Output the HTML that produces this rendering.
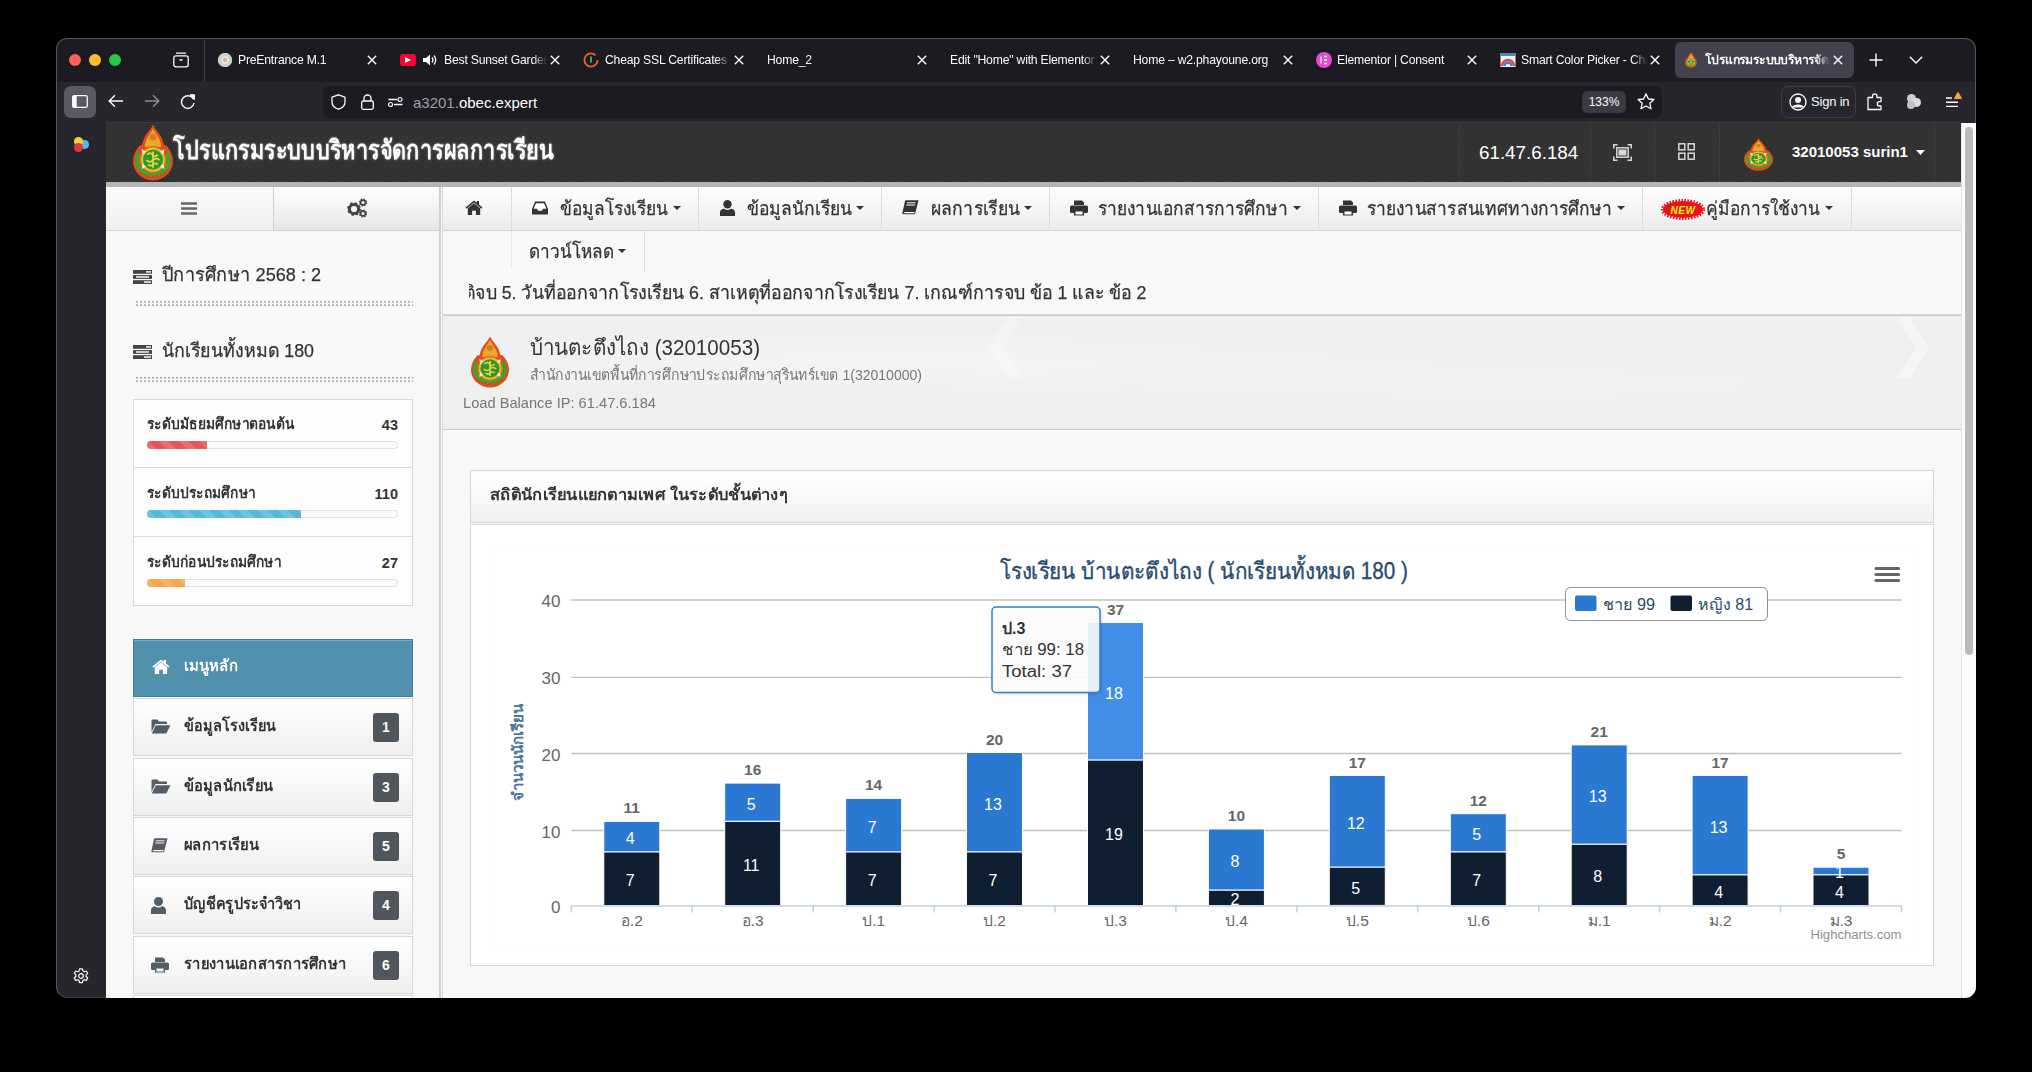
<!DOCTYPE html>
<html><head><meta charset="utf-8">
<style>
*{box-sizing:border-box;margin:0;padding:0}
html,body{width:2032px;height:1072px;overflow:hidden;background:#000;font-family:"Liberation Sans",sans-serif}
#win{position:absolute;left:0;top:0;width:2032px;height:1072px;clip-path:inset(38px 56px 74px 56px round 11px);background:#1c1b22}
.a{position:absolute;white-space:nowrap}
.tl{position:absolute;width:12px;height:12px;border-radius:50%;top:54px}
.tt{position:absolute;top:52px;color:#fbfbfe;font-size:12.2px;letter-spacing:-0.2px;white-space:nowrap;overflow:hidden;line-height:16px;-webkit-mask-image:linear-gradient(90deg,#000 calc(100% - 14px),transparent)}
svg{position:absolute;overflow:visible}
</style></head><body>
<div id="win">

<!-- chrome -->
<div class="a" style="left:56px;top:38px;width:1920px;height:44px;background:#1c1b21"></div>
<div class="a" style="left:56px;top:82px;width:1920px;height:41px;background:#27262c"></div>
<div class="a" style="left:56px;top:123px;width:50px;height:875px;background:#27262c"></div>
<div class="a" style="left:56px;top:38px;width:1920px;height:960px;border-radius:11px;border:1px solid #56555d;border-bottom-color:#3a3940"></div>
<div class="tl" style="left:69px;background:#ff5f57"></div>
<div class="tl" style="left:89px;background:#febc2e"></div>
<div class="tl" style="left:109px;background:#28c840"></div>
<svg style="left:173px;top:52px" width="16" height="16" viewBox="0 0 16 16"><rect x="0.8" y="3.8" width="14.4" height="11" rx="2" fill="none" stroke="#fbfbfe" stroke-width="1.3"/><path d="M3 1.2h10" stroke="#fbfbfe" stroke-width="1.3"/><path d="M6.5 8h3" stroke="#fbfbfe" stroke-width="1.3"/></svg>
<div class="a" style="left:204px;top:38px;width:1px;height:44px;background:#3f3e46"></div>
<div class="a" style="left:1675px;top:42px;width:179px;height:36px;border-radius:6px;background:#42414d"></div>
<div class="tt" style="left:238px;width:126px">PreEntrance M.1</div>
<svg style="left:367px;top:55px" width="10" height="10" viewBox="0 0 10 10"><path d="M0.8 0.8l8.4 8.4M9.2 0.8l-8.4 8.4" stroke="#fbfbfe" stroke-width="1.4"/></svg>
<div class="tt" style="left:444px;width:103px">Best Sunset Garden</div>
<svg style="left:550px;top:55px" width="10" height="10" viewBox="0 0 10 10"><path d="M0.8 0.8l8.4 8.4M9.2 0.8l-8.4 8.4" stroke="#fbfbfe" stroke-width="1.4"/></svg>
<div class="tt" style="left:605px;width:126px">Cheap SSL Certificates</div>
<svg style="left:734px;top:55px" width="10" height="10" viewBox="0 0 10 10"><path d="M0.8 0.8l8.4 8.4M9.2 0.8l-8.4 8.4" stroke="#fbfbfe" stroke-width="1.4"/></svg>
<div class="tt" style="left:767px;width:147px">Home_2</div>
<svg style="left:917px;top:55px" width="10" height="10" viewBox="0 0 10 10"><path d="M0.8 0.8l8.4 8.4M9.2 0.8l-8.4 8.4" stroke="#fbfbfe" stroke-width="1.4"/></svg>
<div class="tt" style="left:950px;width:147px">Edit "Home" with Elementor</div>
<svg style="left:1100px;top:55px" width="10" height="10" viewBox="0 0 10 10"><path d="M0.8 0.8l8.4 8.4M9.2 0.8l-8.4 8.4" stroke="#fbfbfe" stroke-width="1.4"/></svg>
<div class="tt" style="left:1133px;width:147px">Home – w2.phayoune.org</div>
<svg style="left:1283px;top:55px" width="10" height="10" viewBox="0 0 10 10"><path d="M0.8 0.8l8.4 8.4M9.2 0.8l-8.4 8.4" stroke="#fbfbfe" stroke-width="1.4"/></svg>
<div class="tt" style="left:1337px;width:127px">Elementor | Consent</div>
<svg style="left:1467px;top:55px" width="10" height="10" viewBox="0 0 10 10"><path d="M0.8 0.8l8.4 8.4M9.2 0.8l-8.4 8.4" stroke="#fbfbfe" stroke-width="1.4"/></svg>
<div class="tt" style="left:1521px;width:126px">Smart Color Picker - Chrome</div>
<svg style="left:1650px;top:55px" width="10" height="10" viewBox="0 0 10 10"><path d="M0.8 0.8l8.4 8.4M9.2 0.8l-8.4 8.4" stroke="#fbfbfe" stroke-width="1.4"/></svg>
<div class="tt" style="left:1705px;width:125px;font-weight:bold;letter-spacing:-0.6px">โปรแกรมระบบบริหารจัดการผลการเรียน</div>
<svg style="left:1833px;top:55px" width="10" height="10" viewBox="0 0 10 10"><path d="M0.8 0.8l8.4 8.4M9.2 0.8l-8.4 8.4" stroke="#fbfbfe" stroke-width="1.4"/></svg>

<div class="a" style="left:218px;top:53px;width:14px;height:14px;border-radius:50%;background:#dfe6df;box-shadow:inset 0 0 0 3px #c9d4c9"></div>
<div class="a" style="left:223px;top:58px;width:4px;height:4px;border-radius:50%;background:#e8a0a0"></div>
<div class="a" style="left:400px;top:54px;width:16px;height:12px;border-radius:3px;background:#ff0033"></div>
<svg style="left:405px;top:57px" width="6" height="6" viewBox="0 0 6 6"><path d="M0 0L6 3L0 6Z" fill="#fff"/></svg>
<svg style="left:423px;top:54px" width="14" height="12" viewBox="0 0 14 12"><path d="M0 4h3l4-3.5v11L3 8H0Z" fill="#fbfbfe"/><path d="M9 3.5q2 2.5 0 5M11 1.5q3.5 4.5 0 9" stroke="#fbfbfe" stroke-width="1.3" fill="none"/></svg>
<svg style="left:583px;top:52px" width="16" height="16" viewBox="0 0 16 16"><circle cx="8" cy="8" r="6.6" fill="none" stroke="#e8612c" stroke-width="1.8" stroke-dasharray="36 6"/><path d="M8 4.5v6" stroke="#3fae49" stroke-width="2"/></svg>
<div class="a" style="left:1316px;top:52px;width:16px;height:16px;border-radius:50%;background:#e649d2"></div>
<svg style="left:1320px;top:56px" width="8" height="8" viewBox="0 0 8 8"><path d="M1 0.5v7M4 0.5h3M4 4h3M4 7.5h3" stroke="#fff" stroke-width="1.3"/></svg>
<svg style="left:1500px;top:52px" width="16" height="16" viewBox="0 0 16 16"><rect x="0.5" y="1" width="15" height="14" fill="#f2f2f2"/><path d="M2 14A6 6 0 0 1 14 14" fill="none" stroke="#e84c3d" stroke-width="2.5"/><path d="M4.5 14A3.5 3.5 0 0 1 11.5 14" fill="none" stroke="#3a7bd5" stroke-width="2.5"/><rect x="0.5" y="1" width="15" height="3" fill="#4a90a0"/></svg>
<svg style="left:1685px;top:52px" width="12" height="16" viewBox="0 0 37 52" preserveAspectRatio="none"><path d="M18.5 0.5C20 4 23 7 25 10C27 13 28 16 28.5 19L31 19.5C35 24 37 29 37 34A18.5 17.5 0 0 1 0 34C0 29 2 24 6 19.5L8.5 19C9 16 10 13 12 10C14 7 17 4 18.5 0.5Z" fill="#e44a1e"/>
<path d="M18.5 4C20 7 22.5 10 24 13C25.5 16 26 18 26 21H11C11 18 11.5 16 13 13C14.5 10 17 7 18.5 4Z" fill="#e9a828"/>
<circle cx="18.5" cy="12" r="3" fill="#e07a20"/>
<path d="M2 33A16.5 15.5 0 0 0 35 33C35 30 34 27 32 24L29 30L8 30L5 24C3 27 2 30 2 33Z" fill="#48a02c"/>
<circle cx="18.5" cy="32.5" r="12.5" fill="#e46a22"/>
<circle cx="18.5" cy="32.5" r="11" fill="#e8c030"/>
<circle cx="18.5" cy="32.5" r="9.3" fill="#2f9a2c"/>
<path d="M13 28q3-3 5 0q2 3 5 0M12.5 33q3 3 6 0q3-3 6 0M14 37q2.5 2 4.5 0q2-2 4.5 0M18.5 25v15" stroke="#f0d040" stroke-width="1.6" fill="none"/>
<path d="M8 23l4 2-3 3ZM29 23l-4 2 3 3ZM8 41l4-2-3-3ZM29 41l-4-2 3-3Z" fill="#f6e8ee"/>
<path d="M6 44q12.5 8 25 0" stroke="#d04020" stroke-width="1.5" fill="none" stroke-dasharray="2 2"/></svg>
<svg style="left:1869px;top:53px" width="14" height="14" viewBox="0 0 14 14"><path d="M7 0.5v13M0.5 7h13" stroke="#fbfbfe" stroke-width="1.4"/></svg>
<svg style="left:1909px;top:56px" width="14" height="8" viewBox="0 0 14 8"><path d="M0.8 0.8L7 7L13.2 0.8" stroke="#fbfbfe" stroke-width="1.4" fill="none"/></svg>

<div class="a" style="left:64px;top:86px;width:32px;height:32px;border-radius:7px;background:#5b5a62"></div>
<svg style="left:72px;top:95px" width="16" height="13" viewBox="0 0 16 13"><rect x="0.7" y="0.7" width="14.6" height="11.6" rx="1.5" fill="none" stroke="#fbfbfe" stroke-width="1.3"/><rect x="0.7" y="0.7" width="4" height="11.6" fill="#fbfbfe"/></svg>
<svg style="left:108px;top:94px" width="16" height="14" viewBox="0 0 16 14"><path d="M15 7H1.5M7 1.2L1.2 7L7 12.8" stroke="#fbfbfe" stroke-width="1.4" fill="none"/></svg>
<svg style="left:144px;top:94px" width="16" height="14" viewBox="0 0 16 14"><path d="M1 7h13.5M9 1.2L14.8 7L9 12.8" stroke="#8f8f96" stroke-width="1.4" fill="none"/></svg>
<svg style="left:180px;top:94px" width="16" height="15" viewBox="0 0 16 15"><path d="M13.5 5.5A6.3 6.3 0 1 0 14 9" stroke="#fbfbfe" stroke-width="1.4" fill="none"/><path d="M10 0.8h4.5v4.7Z" fill="#fbfbfe" stroke="#fbfbfe" stroke-width="1"/></svg>
<div class="a" style="left:323px;top:86px;width:1339px;height:32px;border-radius:7px;background:#1c1b21"></div>
<svg style="left:331px;top:94px" width="15" height="16" viewBox="0 0 15 16"><path d="M7.5 0.8L14 3.2V8C14 11.5 11 14 7.5 15.2C4 14 1 11.5 1 8V3.2Z" fill="none" stroke="#fbfbfe" stroke-width="1.3"/></svg>
<svg style="left:361px;top:94px" width="13" height="16" viewBox="0 0 13 16"><rect x="0.7" y="7" width="11.6" height="8.3" rx="1.5" fill="none" stroke="#fbfbfe" stroke-width="1.3"/><path d="M3 7V4.5a3.5 3.5 0 0 1 7 0V7" fill="none" stroke="#fbfbfe" stroke-width="1.3"/></svg>
<svg style="left:388px;top:97px" width="15" height="10" viewBox="0 0 15 10"><circle cx="12" cy="2.5" r="2" fill="none" stroke="#fbfbfe" stroke-width="1.2"/><path d="M0.5 2.5h8.5" stroke="#fbfbfe" stroke-width="1.3"/><circle cx="2.5" cy="7.5" r="2" fill="none" stroke="#fbfbfe" stroke-width="1.2"/><path d="M6 7.5h8.5" stroke="#fbfbfe" stroke-width="1.3"/></svg>
<div class="a" style="left:413px;top:94px;font-size:15px;line-height:17px;color:#9f9ea5">a3201.<span style="color:#fbfbfe">obec.expert</span></div>
<div class="a" style="left:1582px;top:91px;width:44px;height:22px;border-radius:5px;background:#3b3a42;color:#fbfbfe;font-size:12px;line-height:22px;text-align:center">133%</div>
<svg style="left:1637px;top:93px" width="18" height="17" viewBox="0 0 18 17"><path d="M9 0.9L11.4 6L16.9 6.5L12.8 10.2L14 15.8L9 13L4 15.8L5.2 10.2L1.1 6.5L6.6 6Z" fill="none" stroke="#fbfbfe" stroke-width="1.3" stroke-linejoin="round"/></svg>
<div class="a" style="left:1781px;top:86px;width:75px;height:32px;border-radius:7px;border:1px solid #3f3e46"></div>
<svg style="left:1789px;top:93px" width="18" height="18" viewBox="0 0 18 18"><circle cx="9" cy="9" r="8" fill="none" stroke="#fbfbfe" stroke-width="1.3"/><circle cx="9" cy="7" r="3" fill="#fbfbfe"/><path d="M3.5 14.5C5 11.5 13 11.5 14.5 14.5" fill="#fbfbfe" stroke="#fbfbfe" stroke-width="1.5"/></svg>
<div class="a" style="left:1811px;top:94px;letter-spacing:-0.2px;font-size:13px;line-height:16px;color:#fbfbfe">Sign in</div>
<svg style="left:1867px;top:92px" width="18" height="18" viewBox="0 0 18 18"><path d="M1 5.5h4.5V4a2.2 2.2 0 0 1 4.4 0v1.5h4.1v4.1h-1.5a2.2 2.2 0 0 0 0 4.4H14v3.5H1Z" fill="none" stroke="#fbfbfe" stroke-width="1.3" stroke-linejoin="round"/></svg>
<div class="a" style="left:1907px;top:94px;width:9px;height:9px;border-radius:50%;background:#cfcfd2"></div>
<div class="a" style="left:1912px;top:98px;width:9px;height:9px;border-radius:50%;background:#dcdcde"></div>
<div class="a" style="left:1907px;top:101px;width:8px;height:8px;border-radius:50%;background:#c4c4c8"></div>
<svg style="left:1945px;top:91px" width="18" height="18" viewBox="0 0 18 18"><path d="M1 7h6M1 11.2h12M1 15.4h12" stroke="#fbfbfe" stroke-width="1.4"/><path d="M9.5 7.5L13 1.3L16.5 7.5Z" fill="#f6a93b" stroke="#f6a93b" stroke-width="1" stroke-linejoin="round"/></svg>
<div class="a" style="left:80px;top:140px;width:9px;height:9px;border-radius:50%;background:#5ab8ee"></div>
<div class="a" style="left:74px;top:137px;width:9px;height:9px;border-radius:50%;background:#f2d42c"></div>
<div class="a" style="left:74px;top:143px;width:9px;height:9px;border-radius:50%;background:#e0374a"></div>
<svg style="left:73px;top:968px" width="16" height="16" viewBox="0 0 16 16"><path d="M6.6 0.8h2.8l.5 2.1 1.4.8 2-.7 1.4 2.4-1.6 1.5v1.6l1.6 1.5-1.4 2.4-2-.7-1.4.8-.5 2.1H6.6l-.5-2.1-1.4-.8-2 .7L1.3 10l1.6-1.5V6.9L1.3 5.4l1.4-2.4 2 .7 1.4-.8Z" fill="none" stroke="#fbfbfe" stroke-width="1.2" stroke-linejoin="round"/><circle cx="8" cy="8" r="2.3" fill="none" stroke="#fbfbfe" stroke-width="1.2"/></svg>
<!-- page bg -->
<div class="a" style="left:106px;top:123px;width:1856px;height:875px;background:#f8f8f8"></div>
<div class="a" style="left:1961px;top:123px;width:15px;height:875px;background:#fbfbfb;border-left:1px solid #e3e3e3"></div>
<div class="a" style="left:1965px;top:127px;width:8px;height:528px;border-radius:4px;background:#bababa"></div>
<!-- header -->
<div class="a" style="left:106px;top:122px;width:1855px;height:1px;background:#3d3c42"></div>
<div class="a" style="left:106px;top:123px;width:1855px;height:59px;background-color:#313131;background-image:repeating-linear-gradient(-45deg,rgba(255,255,255,0.014) 0 1.5px,rgba(0,0,0,0) 1.5px 4px)"></div>
<div class="a" style="left:106px;top:182px;width:1855px;height:5px;background:#b5b5b5"></div>
<svg style="left:133px;top:124px" width="40" height="57" viewBox="0 0 37 52" preserveAspectRatio="none"><path d="M18.5 0.5C20 4 23 7 25 10C27 13 28 16 28.5 19L31 19.5C35 24 37 29 37 34A18.5 17.5 0 0 1 0 34C0 29 2 24 6 19.5L8.5 19C9 16 10 13 12 10C14 7 17 4 18.5 0.5Z" fill="#e44a1e"/>
<path d="M18.5 4C20 7 22.5 10 24 13C25.5 16 26 18 26 21H11C11 18 11.5 16 13 13C14.5 10 17 7 18.5 4Z" fill="#e9a828"/>
<circle cx="18.5" cy="12" r="3" fill="#e07a20"/>
<path d="M2 33A16.5 15.5 0 0 0 35 33C35 30 34 27 32 24L29 30L8 30L5 24C3 27 2 30 2 33Z" fill="#48a02c"/>
<circle cx="18.5" cy="32.5" r="12.5" fill="#e46a22"/>
<circle cx="18.5" cy="32.5" r="11" fill="#e8c030"/>
<circle cx="18.5" cy="32.5" r="9.3" fill="#2f9a2c"/>
<path d="M13 28q3-3 5 0q2 3 5 0M12.5 33q3 3 6 0q3-3 6 0M14 37q2.5 2 4.5 0q2-2 4.5 0M18.5 25v15" stroke="#f0d040" stroke-width="1.6" fill="none"/>
<path d="M8 23l4 2-3 3ZM29 23l-4 2 3 3ZM8 41l4-2-3-3ZM29 41l-4-2 3-3Z" fill="#f6e8ee"/>
<path d="M6 44q12.5 8 25 0" stroke="#d04020" stroke-width="1.5" fill="none" stroke-dasharray="2 2"/></svg>
<div class="a" tw="381" style="transform:scaleX(0.8337);transform-origin:0 0;left:173px;top:132px;font-size:26px;line-height:36px;font-weight:bold;color:#fff;text-shadow:0 0 3px rgba(255,255,255,0.45)">โปรแกรมระบบบริหารจัดการผลการเรียน</div>
<div class="a" style="left:1459px;top:123px;width:1px;height:59px;background:#3d3d3d"></div>
<div class="a" style="left:1590px;top:123px;width:1px;height:59px;background:#3d3d3d"></div>
<div class="a" style="left:1654px;top:123px;width:1px;height:59px;background:#3d3d3d"></div>
<div class="a" style="left:1719px;top:123px;width:1px;height:59px;background:#3d3d3d"></div>
<div class="a" style="left:1934px;top:123px;width:1px;height:59px;background:#3d3d3d"></div>
<div class="a" style="left:1479px;top:141px;font-size:18.8px;line-height:24px;color:#fff">61.47.6.184</div>
<svg style="left:1613px;top:144px" width="19" height="17" viewBox="0 0 19 17"><path d="M0.8 4.5V0.8H4.5M14.5 0.8h3.7v3.7M18.2 12.5v3.7h-3.7M4.5 16.2H0.8v-3.7" stroke="#d8d8d8" stroke-width="1.5" fill="none"/><rect x="3.8" y="3.8" width="11.4" height="9.4" fill="none" stroke="#d8d8d8" stroke-width="1.5"/><rect x="5.5" y="5.5" width="8" height="6" fill="#d8d8d8"/></svg>
<svg style="left:1678px;top:143px" width="17" height="17" viewBox="0 0 17 17"><rect x="0.8" y="0.8" width="6" height="6" fill="none" stroke="#d8d8d8" stroke-width="1.5"/><rect x="10.2" y="0.8" width="6" height="6" fill="none" stroke="#d8d8d8" stroke-width="1.5"/><rect x="0.8" y="10.2" width="6" height="6" fill="none" stroke="#d8d8d8" stroke-width="1.5"/><rect x="10.2" y="10.2" width="6" height="6" fill="none" stroke="#d8d8d8" stroke-width="1.5"/></svg>
<svg style="left:1744px;top:138px" width="29" height="33" viewBox="0 0 37 52" preserveAspectRatio="none"><path d="M18.5 0.5C20 4 23 7 25 10C27 13 28 16 28.5 19L31 19.5C35 24 37 29 37 34A18.5 17.5 0 0 1 0 34C0 29 2 24 6 19.5L8.5 19C9 16 10 13 12 10C14 7 17 4 18.5 0.5Z" fill="#e44a1e"/>
<path d="M18.5 4C20 7 22.5 10 24 13C25.5 16 26 18 26 21H11C11 18 11.5 16 13 13C14.5 10 17 7 18.5 4Z" fill="#e9a828"/>
<circle cx="18.5" cy="12" r="3" fill="#e07a20"/>
<path d="M2 33A16.5 15.5 0 0 0 35 33C35 30 34 27 32 24L29 30L8 30L5 24C3 27 2 30 2 33Z" fill="#48a02c"/>
<circle cx="18.5" cy="32.5" r="12.5" fill="#e46a22"/>
<circle cx="18.5" cy="32.5" r="11" fill="#e8c030"/>
<circle cx="18.5" cy="32.5" r="9.3" fill="#2f9a2c"/>
<path d="M13 28q3-3 5 0q2 3 5 0M12.5 33q3 3 6 0q3-3 6 0M14 37q2.5 2 4.5 0q2-2 4.5 0M18.5 25v15" stroke="#f0d040" stroke-width="1.6" fill="none"/>
<path d="M8 23l4 2-3 3ZM29 23l-4 2 3 3ZM8 41l4-2-3-3ZM29 41l-4-2 3-3Z" fill="#f6e8ee"/>
<path d="M6 44q12.5 8 25 0" stroke="#d04020" stroke-width="1.5" fill="none" stroke-dasharray="2 2"/></svg>
<div class="a" style="left:1792px;top:143px;font-size:15px;line-height:18px;font-weight:bold;color:#fff">32010053 surin1</div>
<svg style="left:1916px;top:150px" width="9" height="5" viewBox="0 0 9 5"><path d="M0 0h9L4.5 5Z" fill="#fff"/></svg>
<!-- sidebar top buttons -->
<div class="a" style="left:106px;top:187px;width:167px;height:44px;background:linear-gradient(#f9f9f9,#f1f1f1);border-bottom:1px solid #d6d6d6"></div>
<div class="a" style="left:273px;top:187px;width:166px;height:44px;background:linear-gradient(#ffffff,#e6e6e6);border-left:1px solid #d0d0d0;border-bottom:1px solid #d0d0d0"></div>
<svg style="left:181px;top:202px" width="16" height="13" viewBox="0 0 16 13"><path d="M0 1.5h16M0 6.5h16M0 11.5h16" stroke="#666" stroke-width="2.6"/></svg>
<svg style="left:346px;top:198px" width="22" height="20" viewBox="0 0 22 20">
<circle cx="8" cy="11" r="5.6" fill="none" stroke="#444" stroke-width="2.6" stroke-dasharray="2.2 2.2"/>
<circle cx="8" cy="11" r="4.6" fill="none" stroke="#444" stroke-width="3"/>
<circle cx="17" cy="4.5" r="3.2" fill="none" stroke="#444" stroke-width="1.8" stroke-dasharray="1.4 1.1"/>
<circle cx="17" cy="4.5" r="2.4" fill="none" stroke="#444" stroke-width="1.6"/>
<circle cx="17" cy="15.5" r="3.2" fill="none" stroke="#444" stroke-width="1.8" stroke-dasharray="1.4 1.1"/>
<circle cx="17" cy="15.5" r="2.4" fill="none" stroke="#444" stroke-width="1.6"/>
</svg>
<!-- sidebar double border -->
<div class="a" style="left:439px;top:187px;width:2px;height:811px;background:#cfcfcf"></div>
<div class="a" style="left:442px;top:187px;width:1px;height:811px;background:#d9d9d9"></div>
<!-- nav bar -->
<div class="a" style="left:443px;top:187px;width:1518px;height:44px;background:linear-gradient(#ffffff,#ebebeb);border-bottom:1px solid #d3d3d3"></div>
<div class="a" style="left:511px;top:187px;width:1px;height:44px;background:#dcdcdc"></div>
<div class="a" style="left:698px;top:187px;width:1px;height:44px;background:#dcdcdc"></div>
<div class="a" style="left:881px;top:187px;width:1px;height:44px;background:#dcdcdc"></div>
<div class="a" style="left:1049px;top:187px;width:1px;height:44px;background:#dcdcdc"></div>
<div class="a" style="left:1318px;top:187px;width:1px;height:44px;background:#dcdcdc"></div>
<div class="a" style="left:1642px;top:187px;width:1px;height:44px;background:#dcdcdc"></div>
<div class="a" style="left:1851px;top:187px;width:1px;height:44px;background:#dcdcdc"></div>
<!-- home icon -->
<svg style="left:465px;top:200px" width="18" height="15" viewBox="0 0 18 15"><path d="M9 0.5L0.5 7.5l1 1.2L9 2.6l7.5 6.1 1-1.2L14 4.6V1h-2.2v1.8Z" fill="#333"/><path d="M2.8 8.2L9 3.2l6.2 5V15h-4.3v-4.3H7.1V15H2.8Z" fill="#333"/></svg>
<!-- inbox icon -->
<svg style="left:532px;top:201px" width="16" height="14" viewBox="0 0 16 14"><path d="M3 0.5h10L16 8v5.5H0V8Z" fill="#333"/><path d="M3.9 2.3h8.2l2.3 5.5H11l-1 2H6l-1-2H1.6Z" fill="#fff"/></svg>
<div class="a" tw="108" style="transform:scaleX(0.9153);transform-origin:0 0;left:560px;top:197px;font-size:19px;line-height:24px;color:#333;-webkit-text-stroke:0.25px #333">ข้อมูลโรงเรียน</div>
<svg style="left:673px;top:206px" width="8" height="4" viewBox="0 0 8 4"><path d="M0 0h8L4 4Z" fill="#333"/></svg>
<!-- user icon -->
<svg style="left:720px;top:200px" width="15" height="16" viewBox="0 0 15 16"><circle cx="7.5" cy="4.2" r="4.2" fill="#333"/><path d="M0 16v-3.5C0 9.8 2.5 8.8 4 8.8q3.5 2.4 7 0c1.5 0 4 1 4 3.7V16Z" fill="#333"/></svg>
<div class="a" tw="105" style="transform:scaleX(0.9211);transform-origin:0 0;left:747px;top:197px;font-size:19px;line-height:24px;color:#333;-webkit-text-stroke:0.25px #333">ข้อมูลนักเรียน</div>
<svg style="left:856px;top:206px" width="8" height="4" viewBox="0 0 8 4"><path d="M0 0h8L4 4Z" fill="#333"/></svg>
<!-- book icon -->
<svg style="left:902px;top:200px" width="17" height="16" viewBox="0 0 17 16"><path d="M4 0.3h12.5L13 14.2H1.3q-1 0-1-1L3 1.2q.3-.9 1-.9Z" fill="#333"/><path d="M4.8 2.8h8.8M4.3 5h8.8" stroke="#fff" stroke-width="1"/><path d="M2.3 12.6h10.2" stroke="#fff" stroke-width="1.2"/></svg>
<div class="a" tw="89" style="transform:scaleX(0.9271);transform-origin:0 0;left:931px;top:197px;font-size:19px;line-height:24px;color:#333;-webkit-text-stroke:0.25px #333">ผลการเรียน</div>
<svg style="left:1024px;top:206px" width="8" height="4" viewBox="0 0 8 4"><path d="M0 0h8L4 4Z" fill="#333"/></svg>
<!-- printer icons -->
<svg style="left:1070px;top:200px" width="18" height="16" viewBox="0 0 18 16"><path d="M4 0.5h8l2 2V5H4Z" fill="#333"/><rect x="0" y="5.5" width="18" height="7.5" rx="1.5" fill="#333"/><rect x="4" y="10.5" width="10" height="5" fill="#333"/><rect x="5.5" y="11.5" width="7" height="3" fill="#fff"/></svg>
<div class="a" tw="190" style="transform:scaleX(0.9135);transform-origin:0 0;left:1098px;top:197px;font-size:19px;line-height:24px;color:#333;-webkit-text-stroke:0.25px #333">รายงานเอกสารการศึกษา</div>
<svg style="left:1293px;top:206px" width="8" height="4" viewBox="0 0 8 4"><path d="M0 0h8L4 4Z" fill="#333"/></svg>
<svg style="left:1339px;top:200px" width="18" height="16" viewBox="0 0 18 16"><path d="M4 0.5h8l2 2V5H4Z" fill="#333"/><rect x="0" y="5.5" width="18" height="7.5" rx="1.5" fill="#333"/><rect x="4" y="10.5" width="10" height="5" fill="#333"/><rect x="5.5" y="11.5" width="7" height="3" fill="#fff"/></svg>
<div class="a" tw="245" style="transform:scaleX(0.9142);transform-origin:0 0;left:1367px;top:197px;font-size:19px;line-height:24px;color:#333;-webkit-text-stroke:0.25px #333">รายงานสารสนเทศทางการศึกษา</div>
<svg style="left:1617px;top:206px" width="8" height="4" viewBox="0 0 8 4"><path d="M0 0h8L4 4Z" fill="#333"/></svg>
<!-- NEW badge -->
<svg style="left:1660px;top:199px" width="46" height="21" viewBox="0 0 46 21"><ellipse cx="23" cy="10.5" rx="20" ry="8.5" fill="#e8131a"/><ellipse cx="23" cy="10.5" rx="21" ry="9.3" fill="none" stroke="#e8131a" stroke-width="2.4" stroke-dasharray="1.6 1.4"/><text x="23" y="14.5" text-anchor="middle" font-family="Liberation Sans" font-weight="bold" font-style="italic" font-size="10" letter-spacing="0.6" fill="#fff200">NEW</text></svg>
<div class="a" tw="114" style="transform:scaleX(0.9120);transform-origin:0 0;left:1706px;top:197px;font-size:19px;line-height:24px;color:#333;-webkit-text-stroke:0.25px #333">คู่มือการใช้งาน</div>
<svg style="left:1825px;top:206px" width="8" height="4" viewBox="0 0 8 4"><path d="M0 0h8L4 4Z" fill="#333"/></svg>
<!-- row 2 -->
<div class="a" style="left:511px;top:231px;width:1px;height:36px;background:#e6e6e6"></div>
<div class="a" style="left:644px;top:231px;width:1px;height:41px;background:#dcdcdc"></div>
<div class="a" tw="85" style="transform:scaleX(0.9043);transform-origin:0 0;left:529px;top:240px;font-size:19px;line-height:24px;color:#333;-webkit-text-stroke:0.25px #333">ดาวน์โหลด</div>
<svg style="left:618px;top:249px" width="8" height="4" viewBox="0 0 8 4"><path d="M0 0h8L4 4Z" fill="#333"/></svg>
<!-- marquee -->
<div class="a" style="left:469px;top:270px;width:1480px;height:40px;overflow:hidden"><div class="a" tw="682.4" style="transform:scaleX(0.9351);transform-origin:0 0;left:-5px;top:11px;font-size:19px;line-height:24px;color:#333;-webkit-text-stroke:0.25px #333">ติจบ 5. วันที่ออกจากโรงเรียน 6. สาเหตุที่ออกจากโรงเรียน 7. เกณฑ์การจบ ข้อ 1 และ ข้อ 2</div></div>
<div class="a" style="left:443px;top:314px;width:1518px;height:1px;background:#d5d5d5"></div>
<!-- sidebar content -->
<svg style="left:133px;top:270px" width="19" height="14" viewBox="0 0 19 14"><rect x="0" y="0" width="19" height="3.8" fill="#444"/><rect x="0" y="5.1" width="19" height="3.8" fill="#444"/><rect x="0" y="10.2" width="19" height="3.8" fill="#444"/><rect x="13" y="1.1" width="5" height="1.6" fill="#eee"/><rect x="3" y="6.2" width="13" height="1.6" fill="#eee"/><rect x="11" y="11.3" width="7" height="1.6" fill="#eee"/></svg>
<div class="a" tw="159" style="transform:scaleX(0.9524);transform-origin:0 0;left:162px;top:263px;font-size:19px;line-height:24px;color:#333;-webkit-text-stroke:0.25px #333">ปีการศึกษา 2568 : 2</div>
<div class="a" style="left:135px;top:300px;width:278px;height:6px;background-image:radial-gradient(circle,#aaa 0.9px,transparent 1.2px);background-size:4px 3.5px"></div>
<svg style="left:133px;top:345px" width="19" height="14" viewBox="0 0 19 14"><rect x="0" y="0" width="19" height="3.8" fill="#444"/><rect x="0" y="5.1" width="19" height="3.8" fill="#444"/><rect x="0" y="10.2" width="19" height="3.8" fill="#444"/><rect x="13" y="1.1" width="5" height="1.6" fill="#eee"/><rect x="3" y="6.2" width="13" height="1.6" fill="#eee"/><rect x="11" y="11.3" width="7" height="1.6" fill="#eee"/></svg>
<div class="a" tw="152" style="transform:scaleX(0.9384);transform-origin:0 0;left:162px;top:339px;font-size:19px;line-height:24px;color:#333;-webkit-text-stroke:0.25px #333">นักเรียนทั้งหมด 180</div>
<div class="a" style="left:135px;top:376px;width:278px;height:6px;background-image:radial-gradient(circle,#aaa 0.9px,transparent 1.2px);background-size:4px 3.5px"></div>
<!-- progress box -->
<div class="a" style="left:133px;top:399px;width:280px;height:207px;background:#fdfdfd;border:1px solid #d8d8d8"></div>
<div class="a" style="left:134px;top:467px;width:278px;height:1px;background:#dcdcdc"></div>
<div class="a" style="left:134px;top:536px;width:278px;height:1px;background:#dcdcdc"></div>
<div class="a" tw="147" style="transform:scaleX(0.9187);transform-origin:0 0;left:147px;top:415px;font-size:15px;line-height:18px;font-weight:bold;color:#333">ระดับมัธยมศึกษาตอนต้น</div>
<div class="a" style="left:358px;top:417px;width:40px;text-align:right;font-size:14.5px;line-height:16px;font-weight:bold;color:#333">43</div>
<div class="a" style="left:147px;top:441px;width:251px;height:8px;border-radius:4px;background:#fbfbfb;box-shadow:inset 0 0 0 1px #e2e2e2"></div>
<div class="a" style="left:147px;top:441px;width:60px;height:8px;border-radius:4px 0 0 4px;background-color:#e4545a;background-image:repeating-linear-gradient(45deg,rgba(255,255,255,0.15) 0 7px,transparent 7px 14px)"></div>
<div class="a" tw="108" style="transform:scaleX(0.9153);transform-origin:0 0;left:147px;top:484px;font-size:15px;line-height:18px;font-weight:bold;color:#333">ระดับประถมศึกษา</div>
<div class="a" style="left:358px;top:486px;width:40px;text-align:right;font-size:14.5px;line-height:16px;font-weight:bold;color:#333">110</div>
<div class="a" style="left:147px;top:510px;width:251px;height:8px;border-radius:4px;background:#fbfbfb;box-shadow:inset 0 0 0 1px #e2e2e2"></div>
<div class="a" style="left:147px;top:510px;width:154px;height:8px;border-radius:4px 0 0 4px;background-color:#56b8d8;background-image:repeating-linear-gradient(45deg,rgba(255,255,255,0.15) 0 7px,transparent 7px 14px)"></div>
<div class="a" tw="134" style="transform:scaleX(0.9178);transform-origin:0 0;left:147px;top:553px;font-size:15px;line-height:18px;font-weight:bold;color:#333">ระดับก่อนประถมศึกษา</div>
<div class="a" style="left:358px;top:555px;width:40px;text-align:right;font-size:14.5px;line-height:16px;font-weight:bold;color:#333">27</div>
<div class="a" style="left:147px;top:579px;width:251px;height:8px;border-radius:4px;background:#fbfbfb;box-shadow:inset 0 0 0 1px #e2e2e2"></div>
<div class="a" style="left:147px;top:579px;width:38px;height:8px;border-radius:4px 0 0 4px;background-color:#f7a54a;background-image:repeating-linear-gradient(45deg,rgba(255,255,255,0.15) 0 7px,transparent 7px 14px)"></div>
<!-- menu -->
<div class="a" style="left:133px;top:639px;width:280px;height:58px;background:#5291ad;border:1px solid #3f7a96;box-shadow:inset 0 1px 0 rgba(255,255,255,0.25)"></div>
<svg style="left:152px;top:659px" width="18" height="15" viewBox="0 0 18 15"><path d="M9 0.5L0.5 7.5l1 1.2L9 2.6l7.5 6.1 1-1.2L14 4.6V1h-2.2v1.8Z" fill="#fff"/><path d="M2.8 8.2L9 3.2l6.2 5V15h-4.3v-4.3H7.1V15H2.8Z" fill="#fff"/></svg>
<div class="a" tw="54" style="transform:scaleX(0.9310);transform-origin:0 0;left:184px;top:656px;font-size:16px;line-height:20px;font-weight:bold;color:#fff;text-shadow:0 1px 1px rgba(0,0,0,0.2)">เมนูหลัก</div>
<div class="a" style="left:133px;top:698px;width:280px;height:58px;background:linear-gradient(#ffffff,#efefef);border:1px solid #d6d6d6"></div>
<svg style="left:151px;top:719px" width="20" height="15" viewBox="0 0 20 15"><path d="M0.5 1.5q0-1 1-1h5l1.5 2h7q1 0 1 1V5H4.5L0.5 13Z" fill="#555d64"/><path d="M4.8 6.2h14.7L15.3 14.5H0.8Z" fill="#555d64"/></svg>
<div class="a" tw="92" style="transform:scaleX(0.9020);transform-origin:0 0;left:184px;top:716px;font-size:16px;line-height:20px;font-weight:bold;color:#333">ข้อมูลโรงเรียน</div>
<div class="a" style="left:373px;top:713px;width:26px;height:29px;border-radius:3px;background:#50565b;color:#fff;font-weight:bold;font-size:14px;line-height:29px;text-align:center">1</div>
<div class="a" style="left:133px;top:758px;width:280px;height:58px;background:linear-gradient(#ffffff,#efefef);border:1px solid #d6d6d6"></div>
<svg style="left:151px;top:779px" width="20" height="15" viewBox="0 0 20 15"><path d="M0.5 1.5q0-1 1-1h5l1.5 2h7q1 0 1 1V5H4.5L0.5 13Z" fill="#555d64"/><path d="M4.8 6.2h14.7L15.3 14.5H0.8Z" fill="#555d64"/></svg>
<div class="a" tw="89" style="transform:scaleX(0.9175);transform-origin:0 0;left:184px;top:776px;font-size:16px;line-height:20px;font-weight:bold;color:#333">ข้อมูลนักเรียน</div>
<div class="a" style="left:373px;top:773px;width:26px;height:29px;border-radius:3px;background:#50565b;color:#fff;font-weight:bold;font-size:14px;line-height:29px;text-align:center">3</div>
<div class="a" style="left:133px;top:817px;width:280px;height:58px;background:linear-gradient(#ffffff,#efefef);border:1px solid #d6d6d6"></div>
<svg style="left:151px;top:838px" width="17" height="16" viewBox="0 0 17 16"><path d="M4 0.3h12.5L13 14.2H1.3q-1 0-1-1L3 1.2q.3-.9 1-.9Z" fill="#555d64"/><path d="M4.8 2.8h8.8M4.3 5h8.8" stroke="#f5f5f5" stroke-width="1"/><path d="M2.3 12.6h10.2" stroke="#f5f5f5" stroke-width="1.2"/></svg>
<div class="a" tw="75" style="transform:scaleX(0.9259);transform-origin:0 0;left:184px;top:835px;font-size:16px;line-height:20px;font-weight:bold;color:#333">ผลการเรียน</div>
<div class="a" style="left:373px;top:832px;width:26px;height:29px;border-radius:3px;background:#50565b;color:#fff;font-weight:bold;font-size:14px;line-height:29px;text-align:center">5</div>
<div class="a" style="left:133px;top:876px;width:280px;height:58px;background:linear-gradient(#ffffff,#efefef);border:1px solid #d6d6d6"></div>
<svg style="left:151px;top:897px" width="15" height="17" viewBox="0 0 15 17"><circle cx="7.5" cy="4.5" r="4.5" fill="#555d64"/><path d="M0 17v-3.5C0 10.5 2.5 9.3 4 9.3q3.5 2.4 7 0c1.5 0 4 1.2 4 4.2V17Z" fill="#555d64"/></svg>
<div class="a" tw="117" style="transform:scaleX(0.9000);transform-origin:0 0;left:184px;top:894px;font-size:16px;line-height:20px;font-weight:bold;color:#333">บัญชีครูประจำวิชา</div>
<div class="a" style="left:373px;top:891px;width:26px;height:29px;border-radius:3px;background:#50565b;color:#fff;font-weight:bold;font-size:14px;line-height:29px;text-align:center">4</div>
<div class="a" style="left:133px;top:936px;width:280px;height:58px;background:linear-gradient(#ffffff,#efefef);border:1px solid #d6d6d6"></div>
<svg style="left:151px;top:957px" width="18" height="16" viewBox="0 0 18 16"><path d="M4 0.5h8l2 2V5H4Z" fill="#555d64"/><rect x="0" y="5.5" width="18" height="7.5" rx="1.5" fill="#555d64"/><rect x="4" y="10.5" width="10" height="5" fill="#555d64"/><rect x="5.5" y="11.5" width="7" height="3" fill="#f5f5f5"/></svg>
<div class="a" tw="162" style="transform:scaleX(0.9205);transform-origin:0 0;left:184px;top:954px;font-size:16px;line-height:20px;font-weight:bold;color:#333">รายงานเอกสารการศึกษา</div>
<div class="a" style="left:373px;top:951px;width:26px;height:29px;border-radius:3px;background:#50565b;color:#fff;font-weight:bold;font-size:14px;line-height:29px;text-align:center">6</div>
<div class="a" style="left:133px;top:995px;width:280px;height:58px;background:linear-gradient(#ffffff,#efefef);border:1px solid #d6d6d6"></div>
<svg style="left:151px;top:1016px" width="20" height="15" viewBox="0 0 20 15"><path d="M0.5 1.5q0-1 1-1h5l1.5 2h7q1 0 1 1V5H4.5L0.5 13Z" fill="#555d64"/><path d="M4.8 6.2h14.7L15.3 14.5H0.8Z" fill="#555d64"/></svg>
<div class="a" tw="100" style="transform:scaleX(1.0526);transform-origin:0 0;left:184px;top:1013px;font-size:16px;line-height:20px;font-weight:bold;color:#333">ข้อมูลเพิ่มเติม</div>
<!-- school panel -->
<div class="a" style="left:443px;top:315px;width:1518px;height:115px;background-color:#efefef;background-image:radial-gradient(ellipse at 30% 40%,rgba(255,255,255,0.35),transparent 40%),radial-gradient(ellipse at 70% 60%,rgba(255,255,255,0.2),transparent 45%);border-top:1px solid #cbcbcb;border-bottom:1px solid #cbcbcb"></div>
<svg style="left:989px;top:316px" width="34" height="62" viewBox="0 0 34 62"><path d="M34 0H20L0 31L20 62H34L14 31Z" fill="rgba(255,255,255,0.28)"/></svg>
<svg style="left:1897px;top:317px" width="32" height="61" viewBox="0 0 32 61"><path d="M0 0H13L32 30.5L13 61H0L19 30.5Z" fill="rgba(255,255,255,0.4)"/></svg>
<svg style="left:471px;top:336px" width="38" height="52" viewBox="0 0 37 52" preserveAspectRatio="none"><path d="M18.5 0.5C20 4 23 7 25 10C27 13 28 16 28.5 19L31 19.5C35 24 37 29 37 34A18.5 17.5 0 0 1 0 34C0 29 2 24 6 19.5L8.5 19C9 16 10 13 12 10C14 7 17 4 18.5 0.5Z" fill="#e44a1e"/>
<path d="M18.5 4C20 7 22.5 10 24 13C25.5 16 26 18 26 21H11C11 18 11.5 16 13 13C14.5 10 17 7 18.5 4Z" fill="#e9a828"/>
<circle cx="18.5" cy="12" r="3" fill="#e07a20"/>
<path d="M2 33A16.5 15.5 0 0 0 35 33C35 30 34 27 32 24L29 30L8 30L5 24C3 27 2 30 2 33Z" fill="#48a02c"/>
<circle cx="18.5" cy="32.5" r="12.5" fill="#e46a22"/>
<circle cx="18.5" cy="32.5" r="11" fill="#e8c030"/>
<circle cx="18.5" cy="32.5" r="9.3" fill="#2f9a2c"/>
<path d="M13 28q3-3 5 0q2 3 5 0M12.5 33q3 3 6 0q3-3 6 0M14 37q2.5 2 4.5 0q2-2 4.5 0M18.5 25v15" stroke="#f0d040" stroke-width="1.6" fill="none"/>
<path d="M8 23l4 2-3 3ZM29 23l-4 2 3 3ZM8 41l4-2-3-3ZM29 41l-4-2 3-3Z" fill="#f6e8ee"/>
<path d="M6 44q12.5 8 25 0" stroke="#d04020" stroke-width="1.5" fill="none" stroke-dasharray="2 2"/></svg>
<div class="a" tw="230" style="transform:scaleX(0.9363);transform-origin:0 0;left:530px;top:334px;font-size:22px;line-height:28px;color:#333">บ้านตะตึงไถง (32010053)</div>
<div class="a" tw="392" style="transform:scaleX(0.9350);transform-origin:0 0;left:530px;top:366px;font-size:15px;line-height:18px;color:#777">สำนักงานเขตพื้นที่การศึกษาประถมศึกษาสุรินทร์เขต 1(32010000)</div>
<div class="a" tw="193" style="transform:scaleX(1.0101);transform-origin:0 0;left:463px;top:395px;font-size:14.5px;line-height:17px;color:#777">Load Balance IP: 61.47.6.184</div>
<!-- chart panel -->
<div class="a" style="left:470px;top:470px;width:1464px;height:53px;background:linear-gradient(#ffffff,#f1f1f1);border:1px solid #d6d6d6"></div>
<div class="a" tw="298" style="transform:scaleX(1.0295);transform-origin:0 0;left:490px;top:485px;font-size:16px;line-height:20px;font-weight:bold;color:#333">สถิตินักเรียนแยกตามเพศ ในระดับชั้นต่างๆ</div>
<div class="a" style="left:470px;top:524px;width:1464px;height:442px;background:#fff;border:1px solid #d6d6d6"></div>
<div class="a" style="left:490px;top:546px;width:1424px;height:404px;background:#fff;box-shadow:0 0 4px rgba(0,0,0,0.025)"></div>
<svg style="left:0;top:0" width="2032" height="1072" viewBox="0 0 2032 1072" font-family="Liberation Sans">
<path d="M571.3 830.5H1901.5" stroke="#c0c0c0" stroke-width="1.4"/>
<path d="M571.3 753.5H1901.5" stroke="#c0c0c0" stroke-width="1.4"/>
<path d="M571.3 677.4H1901.5" stroke="#c0c0c0" stroke-width="1.4"/>
<path d="M571.3 600.0H1901.5" stroke="#c0c0c0" stroke-width="1.4"/>
<rect x="603.8" y="821.4" width="56" height="30.6" fill="#2b78d2" stroke="#fff" stroke-width="1"/>
<rect x="603.8" y="852.0" width="56" height="53.5" fill="#0f1f31" stroke="#fff" stroke-width="1"/>
<rect x="724.7" y="783.1" width="56" height="38.2" fill="#2b78d2" stroke="#fff" stroke-width="1"/>
<rect x="724.7" y="821.4" width="56" height="84.1" fill="#0f1f31" stroke="#fff" stroke-width="1"/>
<rect x="845.6" y="798.4" width="56" height="53.6" fill="#2b78d2" stroke="#fff" stroke-width="1"/>
<rect x="845.6" y="852.0" width="56" height="53.5" fill="#0f1f31" stroke="#fff" stroke-width="1"/>
<rect x="966.5" y="752.5" width="56" height="99.5" fill="#2b78d2" stroke="#fff" stroke-width="1"/>
<rect x="966.5" y="852.0" width="56" height="53.5" fill="#0f1f31" stroke="#fff" stroke-width="1"/>
<rect x="1087.5" y="622.5" width="56" height="137.7" fill="#428ee6" stroke="#fff" stroke-width="1"/>
<rect x="1087.5" y="760.1" width="56" height="145.4" fill="#0f1f31" stroke="#fff" stroke-width="1"/>
<rect x="1208.4" y="829.0" width="56" height="61.2" fill="#2b78d2" stroke="#fff" stroke-width="1"/>
<rect x="1208.4" y="890.2" width="56" height="15.3" fill="#0f1f31" stroke="#fff" stroke-width="1"/>
<rect x="1329.3" y="775.5" width="56" height="91.8" fill="#2b78d2" stroke="#fff" stroke-width="1"/>
<rect x="1329.3" y="867.2" width="56" height="38.2" fill="#0f1f31" stroke="#fff" stroke-width="1"/>
<rect x="1450.3" y="813.7" width="56" height="38.2" fill="#2b78d2" stroke="#fff" stroke-width="1"/>
<rect x="1450.3" y="852.0" width="56" height="53.5" fill="#0f1f31" stroke="#fff" stroke-width="1"/>
<rect x="1571.2" y="744.9" width="56" height="99.4" fill="#2b78d2" stroke="#fff" stroke-width="1"/>
<rect x="1571.2" y="844.3" width="56" height="61.2" fill="#0f1f31" stroke="#fff" stroke-width="1"/>
<rect x="1692.1" y="775.5" width="56" height="99.4" fill="#2b78d2" stroke="#fff" stroke-width="1"/>
<rect x="1692.1" y="874.9" width="56" height="30.6" fill="#0f1f31" stroke="#fff" stroke-width="1"/>
<rect x="1813.0" y="867.2" width="56" height="7.6" fill="#2b78d2" stroke="#fff" stroke-width="1"/>
<rect x="1813.0" y="874.9" width="56" height="30.6" fill="#0f1f31" stroke="#fff" stroke-width="1"/>
<path d="M571.3 906.0H1901.5" stroke="#c0d0e0" stroke-width="1.5"/>
<path d="M571.3 905.5V912.5" stroke="#c0d0e0" stroke-width="1.5"/>
<path d="M692.2 905.5V912.5" stroke="#c0d0e0" stroke-width="1.5"/>
<path d="M813.2 905.5V912.5" stroke="#c0d0e0" stroke-width="1.5"/>
<path d="M934.1 905.5V912.5" stroke="#c0d0e0" stroke-width="1.5"/>
<path d="M1055.0 905.5V912.5" stroke="#c0d0e0" stroke-width="1.5"/>
<path d="M1175.9 905.5V912.5" stroke="#c0d0e0" stroke-width="1.5"/>
<path d="M1296.9 905.5V912.5" stroke="#c0d0e0" stroke-width="1.5"/>
<path d="M1417.8 905.5V912.5" stroke="#c0d0e0" stroke-width="1.5"/>
<path d="M1538.7 905.5V912.5" stroke="#c0d0e0" stroke-width="1.5"/>
<path d="M1659.6 905.5V912.5" stroke="#c0d0e0" stroke-width="1.5"/>
<path d="M1780.6 905.5V912.5" stroke="#c0d0e0" stroke-width="1.5"/>
<path d="M1901.5 905.5V912.5" stroke="#c0d0e0" stroke-width="1.5"/>
<text x="630.3" y="886.0" text-anchor="middle" font-size="16" fill="#fff">7</text>
<text x="630.3" y="844.0" text-anchor="middle" font-size="16" fill="#fff">4</text>
<text x="631.8" y="813.4" text-anchor="middle" font-size="15.5" font-weight="bold" fill="#666">11</text>
<text x="631.8" y="925.5" text-anchor="middle" font-size="15.5" fill="#666">อ.2</text>
<text x="751.2" y="870.7" text-anchor="middle" font-size="16" fill="#fff">11</text>
<text x="751.2" y="809.5" text-anchor="middle" font-size="16" fill="#fff">5</text>
<text x="752.7" y="775.1" text-anchor="middle" font-size="15.5" font-weight="bold" fill="#666">16</text>
<text x="752.7" y="925.5" text-anchor="middle" font-size="15.5" fill="#666">อ.3</text>
<text x="872.1" y="886.0" text-anchor="middle" font-size="16" fill="#fff">7</text>
<text x="872.1" y="832.5" text-anchor="middle" font-size="16" fill="#fff">7</text>
<text x="873.6" y="790.4" text-anchor="middle" font-size="15.5" font-weight="bold" fill="#666">14</text>
<text x="873.6" y="925.5" text-anchor="middle" font-size="15.5" fill="#666">ป.1</text>
<text x="993.0" y="886.0" text-anchor="middle" font-size="16" fill="#fff">7</text>
<text x="993.0" y="809.5" text-anchor="middle" font-size="16" fill="#fff">13</text>
<text x="994.5" y="744.5" text-anchor="middle" font-size="15.5" font-weight="bold" fill="#666">20</text>
<text x="994.5" y="925.5" text-anchor="middle" font-size="15.5" fill="#666">ป.2</text>
<text x="1114.0" y="840.1" text-anchor="middle" font-size="16" fill="#fff">19</text>
<text x="1114.0" y="698.6" text-anchor="middle" font-size="16" fill="#fff">18</text>
<text x="1115.5" y="614.5" text-anchor="middle" font-size="15.5" font-weight="bold" fill="#666">37</text>
<text x="1115.5" y="925.5" text-anchor="middle" font-size="15.5" fill="#666">ป.3</text>
<text x="1234.9" y="905.2" text-anchor="middle" font-size="16" fill="#fff">2</text>
<text x="1234.9" y="866.9" text-anchor="middle" font-size="16" fill="#fff">8</text>
<text x="1236.4" y="821.0" text-anchor="middle" font-size="15.5" font-weight="bold" fill="#666">10</text>
<text x="1236.4" y="925.5" text-anchor="middle" font-size="15.5" fill="#666">ป.4</text>
<text x="1355.8" y="893.7" text-anchor="middle" font-size="16" fill="#fff">5</text>
<text x="1355.8" y="828.7" text-anchor="middle" font-size="16" fill="#fff">12</text>
<text x="1357.3" y="767.5" text-anchor="middle" font-size="15.5" font-weight="bold" fill="#666">17</text>
<text x="1357.3" y="925.5" text-anchor="middle" font-size="15.5" fill="#666">ป.5</text>
<text x="1476.8" y="886.0" text-anchor="middle" font-size="16" fill="#fff">7</text>
<text x="1476.8" y="840.1" text-anchor="middle" font-size="16" fill="#fff">5</text>
<text x="1478.3" y="805.7" text-anchor="middle" font-size="15.5" font-weight="bold" fill="#666">12</text>
<text x="1478.3" y="925.5" text-anchor="middle" font-size="15.5" fill="#666">ป.6</text>
<text x="1597.7" y="882.2" text-anchor="middle" font-size="16" fill="#fff">8</text>
<text x="1597.7" y="801.9" text-anchor="middle" font-size="16" fill="#fff">13</text>
<text x="1599.2" y="736.9" text-anchor="middle" font-size="15.5" font-weight="bold" fill="#666">21</text>
<text x="1599.2" y="925.5" text-anchor="middle" font-size="15.5" fill="#666">ม.1</text>
<text x="1718.6" y="897.5" text-anchor="middle" font-size="16" fill="#fff">4</text>
<text x="1718.6" y="832.5" text-anchor="middle" font-size="16" fill="#fff">13</text>
<text x="1720.1" y="767.5" text-anchor="middle" font-size="15.5" font-weight="bold" fill="#666">17</text>
<text x="1720.1" y="925.5" text-anchor="middle" font-size="15.5" fill="#666">ม.2</text>
<text x="1839.5" y="897.5" text-anchor="middle" font-size="16" fill="#fff">4</text>
<text x="1839.5" y="878.4" text-anchor="middle" font-size="16" fill="#fff">1</text>
<text x="1841.0" y="859.2" text-anchor="middle" font-size="15.5" font-weight="bold" fill="#666">5</text>
<text x="1841.0" y="925.5" text-anchor="middle" font-size="15.5" fill="#666">ม.3</text>
<text x="560.5" y="912.5" text-anchor="end" font-size="17" fill="#666">0</text>
<text x="560.5" y="837.5" text-anchor="end" font-size="17" fill="#666">10</text>
<text x="560.5" y="760.5" text-anchor="end" font-size="17" fill="#666">20</text>
<text x="560.5" y="684.4" text-anchor="end" font-size="17" fill="#666">30</text>
<text x="560.5" y="607.0" text-anchor="end" font-size="17" fill="#666">40</text>
<text transform="translate(522.5 752) rotate(-90)" text-anchor="middle" font-size="15" font-weight="bold" fill="#4d759e" textLength="97" lengthAdjust="spacingAndGlyphs">จำนวนนักเรียน</text>
<text x="1000" y="578.5" font-size="23" fill="#274b6d" stroke="#274b6d" stroke-width="0.35" textLength="408" lengthAdjust="spacingAndGlyphs">โรงเรียน บ้านตะตึงไถง ( นักเรียนทั้งหมด 180 )</text>
<path d="M1876 568.5h22.5M1876 574.5h22.5M1876 580.5h22.5" stroke="#666" stroke-width="3.2" stroke-linecap="round"/>
<rect x="1565.5" y="587.5" width="202" height="33" rx="5" fill="#fff" stroke="#909090" stroke-width="1"/>
<rect x="1575" y="595.5" width="21.5" height="15.5" rx="2" fill="#2b78d2"/>
<text x="1603" y="609.5" font-size="16" fill="#274b6d" textLength="52" lengthAdjust="spacingAndGlyphs">ชาย 99</text>
<rect x="1670.5" y="595.5" width="21.5" height="15.5" rx="2" fill="#0f1f31"/>
<text x="1698" y="609.5" font-size="16" fill="#274b6d" textLength="55" lengthAdjust="spacingAndGlyphs">หญิง 81</text>
<text x="1901.5" y="939" text-anchor="end" font-size="13" fill="#909090" textLength="91" lengthAdjust="spacingAndGlyphs">Highcharts.com</text>
<rect x="992" y="607" width="108" height="85.5" rx="4" fill="rgba(255,255,255,0.88)" stroke="#2f7ed8" stroke-width="1.5" filter="drop-shadow(1px 1px 1px rgba(0,0,0,0.15))"/>
<text x="1002" y="634" font-size="16" font-weight="bold" fill="#333">ป.3</text>
<text x="1002" y="655" font-size="16" fill="#333" textLength="82" lengthAdjust="spacingAndGlyphs">ชาย 99: 18</text>
<text x="1002" y="677" font-size="16" fill="#333" textLength="70" lengthAdjust="spacingAndGlyphs">Total: 37</text>
</svg>
</div>
<script>(function(){function fit(){var els=document.querySelectorAll("[tw]");for(var i=0;i<els.length;i++){var e=els[i];var tw=parseFloat(e.getAttribute("tw"));e.style.transform="none";var r=document.createRange();r.selectNodeContents(e);var w=r.getBoundingClientRect().width;if(w>0){e.style.transform="scaleX("+(tw/w)+")";}}}try{fit();}catch(x){}})();</script>
</body></html>
